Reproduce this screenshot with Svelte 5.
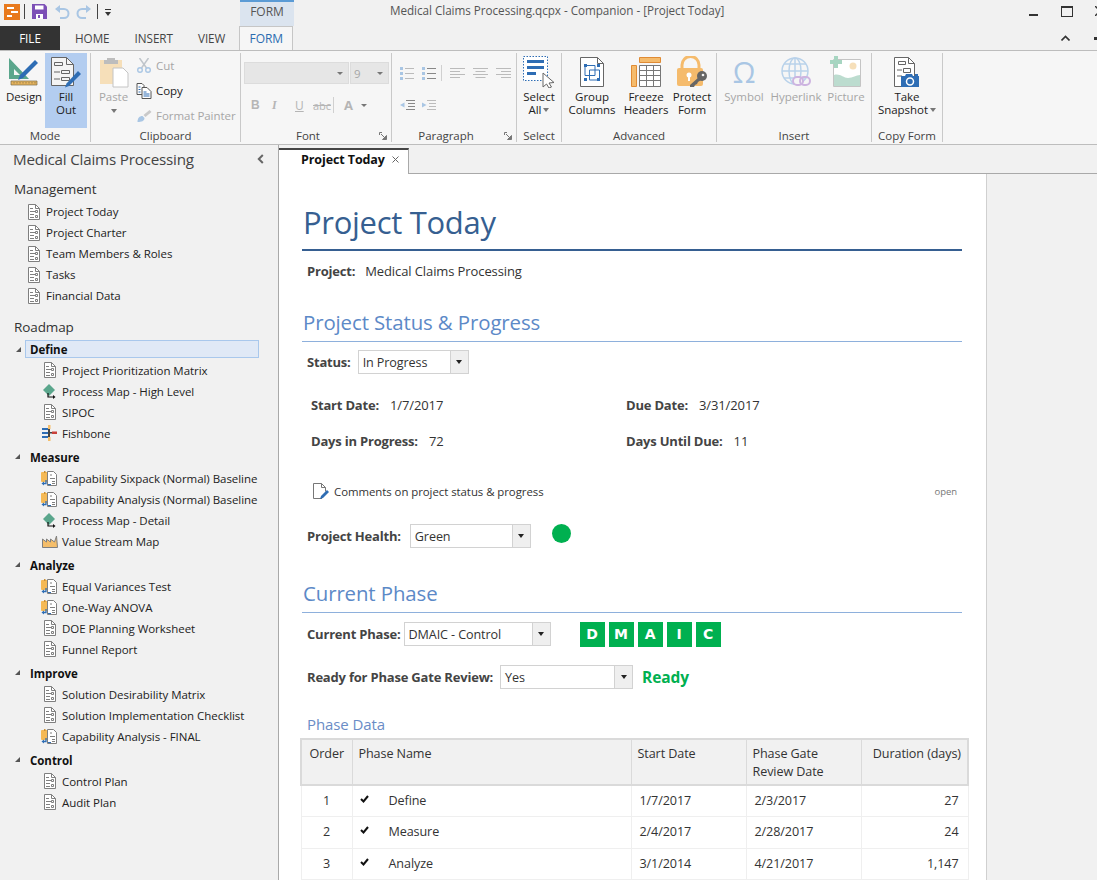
<script lang="ts">
  const management = ["Project Today", "Project Charter", "Team Members & Roles", "Tasks", "Financial Data"];

  const roadmap = [
    {
      name: "Define",
      items: [
        { label: "Project Prioritization Matrix", icon: "doc" },
        { label: "Process Map - High Level", icon: "flow" },
        { label: "SIPOC", icon: "doc" },
        { label: "Fishbone", icon: "fish" },
      ],
    },
    {
      name: "Measure",
      items: [
        { label: "\u00a0Capability Sixpack (Normal) Baseline", icon: "cap" },
        { label: "Capability Analysis (Normal) Baseline", icon: "cap" },
        { label: "Process Map - Detail", icon: "flow" },
        { label: "Value Stream Map", icon: "vsm" },
      ],
    },
    {
      name: "Analyze",
      items: [
        { label: "Equal Variances Test", icon: "cap" },
        { label: "One-Way ANOVA", icon: "cap" },
        { label: "DOE Planning Worksheet", icon: "doc" },
        { label: "Funnel Report", icon: "doc" },
      ],
    },
    {
      name: "Improve",
      items: [
        { label: "Solution Desirability Matrix", icon: "doc" },
        { label: "Solution Implementation Checklist", icon: "doc" },
        { label: "Capability Analysis - FINAL", icon: "cap" },
      ],
    },
    {
      name: "Control",
      items: [
        { label: "Control Plan", icon: "doc" },
        { label: "Audit Plan", icon: "doc" },
      ],
    },
  ];

  const phases = [
    { order: 1, name: "Define", start: "1/7/2017", gate: "2/3/2017", days: "27" },
    { order: 2, name: "Measure", start: "2/4/2017", gate: "2/28/2017", days: "24" },
    { order: 3, name: "Analyze", start: "3/1/2014", gate: "4/21/2017", days: "1,147" },
  ];
</script>

{#snippet navIcon(kind)}
  <svg class="nav-icon" viewBox="0 0 18 16" width="18" height="16">
    {#if kind === "doc"}
      <path d="M3.5.5h7l4 4v11h-11z" fill="#fff" stroke="#7f7f7f" />
      <path d="M10.5.5v4h4" fill="none" stroke="#7f7f7f" />
      <path d="M5 4.500h3M5 7.500h5M5 10.500h4M5 13.500h4" stroke="#7f7f7f" />
      <path d="M10.500 6.500h2v2h-2zM10.500 11.500h2v2h-2z" fill="none" stroke="#7f7f7f" />
    {:else if kind === "flow"}
      <path d="M8 1l6 6-6 6-6-6z" fill="#5aa68c" />
      <path d="M7 10v4h6" fill="none" stroke="#111" stroke-width="1.2" />
      <path d="M12 12l2.500 2-2.500 2z" fill="#111" />
    {:else if kind === "fish"}
      <path d="M1 3h6v2H1zM1 7h6v2H1zM1 11h6v2H1z" fill="#2e6db4" />
      <path d="M7 0h2.500v4H7zM7 12h2.500v4H7z" fill="#f5be6a" />
      <path d="M7 4h2v8H7z" fill="#444" />
      <path d="M9 7h2v1.500H9z" fill="#444" />
      <path d="M11 6.500h5v2.500h-5z" fill="#c9403a" />
    {:else if kind === "cap"}
      <path d="M0 3a1 1 0 0 1 1-1h8v10H1a1 1 0 0 1-1-1z" fill="#f5b955" />
      <path d="M3 1h1.500v2H3z" fill="#c98f35" />
      <path d="M6.500 1.500h6l3 3v11h-9z" fill="#fff" stroke="#7f7f7f" />
      <path d="M9 5h2M9 8.500h5M11 11.500h3M11 13.500h3" stroke="#7f7f7f" />
      <path d="M5 10v3.500H2" fill="none" stroke="#2e6db4" stroke-width="1.300" />
      <path d="M3 11.500L.5 13.500 3 15.500z" fill="#2e6db4" />
      <path d="M7 14.500h3" stroke="#2e6db4" />
    {:else}
      <path d="M1.500 14.500V6l4 3V6l4 3V6l4 3 2-6 1 11.500z" fill="#f5be6a" stroke="#7f7f7f" />
    {/if}
  </svg>
{/snippet}

{#snippet combo(text, kind)}
  <div class="combo {kind}">
    <span class="combo-text">{text}</span>
    <span class="combo-btn"><i class="arrow"></i></span>
  </div>
{/snippet}

{#snippet launcher()}
  <svg class="launcher" viewBox="0 0 8 8" width="8" height="8">
    <path d="M.5 3V.5H3" fill="none" stroke="#777" />
    <path d="M2 2l4.500 4.500M7.500 3.500v4h-4z" fill="#777" stroke="#777" />
  </svg>
{/snippet}

<div class="app">
  <!-- title bar -->
  <header class="titlebar">
    <div class="qat">
      <svg viewBox="0 0 16 16" width="16" height="16">
        <rect width="16" height="16" fill="#e8791c" />
        <path d="M3 4h7M7 8h7M3 12h5" stroke="#fff" stroke-width="2" />
      </svg>
      <i class="qat-sep"></i>
      <svg class="qat-save" viewBox="0 0 15 15" width="15" height="15">
        <path d="M0 0h12.500L15 2.500V15H0z" fill="#7c4fb6" />
        <path d="M3 1.500h8.500v4H3z" fill="#fff" />
        <path d="M4 10h7v5H4z" fill="#fff" />
        <path d="M6 11h2v3H6z" fill="#7c4fb6" />
      </svg>
      <svg class="qat-undo" viewBox="0 0 16 14" width="16" height="14">
        <path d="M2.500 4H10a4.500 4.500 0 0 1 0 9H6" fill="none" stroke="#a9c6e4" stroke-width="2" />
        <path d="M6 0L1 4l5 4z" fill="#a9c6e4" />
      </svg>
      <svg class="qat-redo" viewBox="0 0 16 14" width="16" height="14">
        <path d="M13.500 4H6a4.500 4.500 0 0 0 0 9h4" fill="none" stroke="#a9c6e4" stroke-width="2" />
        <path d="M10 0l5 4-5 4z" fill="#a9c6e4" />
      </svg>
      <i class="qat-sep second"></i>
      <svg class="qat-more" viewBox="0 0 6 7" width="6" height="7">
        <path d="M0 .5h6" stroke="#333" />
        <path d="M0 3h6L3 7z" fill="#333" />
      </svg>
    </div>
    <div class="context-tab">FORM</div>
    <div class="doc-title">Medical Claims Processing.qcpx - Companion - [Project Today]</div>
    <div class="win-controls">
      <i class="win-min"></i>
      <i class="win-max"></i>
      <svg class="win-close" viewBox="0 0 10 10" width="10" height="10">
        <path d="M0 0l10 10M10 0L0 10" stroke="#333" stroke-width="1.500" />
      </svg>
    </div>
  </header>

  <!-- ribbon tabs -->
  <nav class="tabs">
    <div class="tab-file">FILE</div>
    <div class="tab">HOME</div>
    <div class="tab">INSERT</div>
    <div class="tab">VIEW</div>
    <div class="tab-active">FORM</div>
    <div class="tabs-right">
      <svg viewBox="0 0 9 6" width="9" height="6">
        <path d="M.5 5.500L4.500 1.500l4 4" fill="none" stroke="#333" stroke-width="1.600" />
      </svg>
      <i class="pin"></i>
    </div>
  </nav>

  <!-- ribbon -->
  <section class="ribbon">
    <div class="group g-mode">
      <div class="tools">
        <div class="big b-design">
          <svg viewBox="0 0 32 30" width="32" height="30">
            <path d="M1 1l20 21H1zM6 12v6h6z" fill="#5aa68c" fill-rule="evenodd" />
            <path d="M3 24h26v4H3z" fill="#e7b45c" stroke="#7a6a48" stroke-width=".7" />
            <path d="M6 25v1.500M9 25v1.500M12 25v1.500M15 25v1.500M18 25v1.500M21 25v1.500M24 25v1.500M27 25v1.500" stroke="#7a6a48" stroke-width=".7" />
            <path d="M27 3l3 3-15 15-5 2 2-5z" fill="#2e6db4" />
          </svg>
          <span>Design</span>
        </div>
        <div class="big b-fill">
          <svg viewBox="0 0 32 32" width="32" height="32">
            <path d="M1.500 1.500h15l7 7v21h-22z" fill="#f4f4f4" stroke="#666" />
            <path d="M16.500 1.500v7h7" fill="none" stroke="#666" />
            <path d="M4.500 6.500h8v3h-8zM11.500 14.500h8v3h-8zM11.500 21.500h8v3h-8z" fill="none" stroke="#666" />
            <path d="M4 16h6M4 23h6" stroke="#666" />
            <path d="M28 15l3 3-12 12-4 1.500 1.500-4z" fill="#2e6db4" />
          </svg>
          <span>Fill<br />Out</span>
        </div>
      </div>
      <div class="group-label">Mode</div>
    </div>

    <div class="group g-clip">
      <div class="tools">
        <div class="big b-paste off">
          <svg viewBox="0 0 30 30" width="30" height="30">
            <path d="M1 3h22v24H1z" fill="#f6dfb9" />
            <path d="M8 1h8v2h3v4H5V3h3z" fill="#bdbdbd" />
            <path d="M14 11h10l5 5v14H14z" fill="#fff" stroke="#c4c4c4" />
          </svg>
          <span>Paste</span>
          <i class="caret"></i>
        </div>
        <div class="small-stack">
          <div class="small off">
            <svg viewBox="0 0 15 15" width="15" height="15">
              <path d="M3 0l7 10M12 0L5 10" stroke="#bfc5cb" stroke-width="1.500" />
              <circle cx="3.500" cy="12" r="2.300" fill="none" stroke="#a9c6e4" stroke-width="1.400" />
              <circle cx="11.500" cy="12" r="2.300" fill="none" stroke="#a9c6e4" stroke-width="1.400" />
            </svg>
            <span>Cut</span>
          </div>
          <div class="small">
            <svg viewBox="0 0 15 16" width="15" height="16">
              <path d="M.5.500h5l2 2v9h-7z" fill="#fff" stroke="#555" />
              <path d="M5.500 4.500h5l4 4v7h-9z" fill="#fff" stroke="#555" />
              <path d="M2 4h2M2 6.500h2M2 9h2M7 9h3M7 11h6M7 13h6" stroke="#2e6db4" />
            </svg>
            <span>Copy</span>
          </div>
          <div class="small off">
            <svg viewBox="0 0 15 14" width="15" height="14">
              <path d="M1 13c0-4 2-6 5-6l2 2c0 3-3 4-7 4z" fill="#a9c6e4" />
              <path d="M7 6l6-5 2 2-6 5z" fill="#c9c9c9" />
            </svg>
            <span>Format Painter</span>
          </div>
        </div>
      </div>
      <div class="group-label">Clipboard</div>
    </div>

    <div class="group g-font">
      <div class="tools column">
        <div class="font-row">
          <div class="font-box name"><i class="arrow soft"></i></div>
          <div class="font-box size"><span>9</span><i class="arrow soft"></i></div>
        </div>
        <div class="format-row">
          <b>B</b>
          <em>I</em>
          <u>U</u>
          <s>abc</s>
          <i class="fmt-sep"></i>
          <span class="color-a">A</span>
          <i class="arrow soft"></i>
        </div>
      </div>
      <div class="group-label has-launcher">Font{@render launcher()}</div>
    </div>

    <div class="group g-para">
      <div class="tools column">
        <div class="para-row">
          <svg viewBox="0 0 14 14" width="14" height="14">
            <path d="M0 1h3v3H0zM0 6h3v3H0zM0 11h3v3H0z" fill="#a9c6e4" />
            <path d="M5 2.500h9M5 7.500h9M5 12.500h9" stroke="#bbb" />
          </svg>
          <svg class="num" viewBox="0 0 14 14" width="14" height="14">
            <path d="M0 1h3v3H0zM0 6h3v3H0zM0 11h3v3H0z" fill="#a9c6e4" />
            <path d="M5 2.500h9M5 7.500h9M5 12.500h9" stroke="#888" />
          </svg>
          <i class="fmt-sep"></i>
          <svg viewBox="0 0 15 12" width="15" height="12">
            <path d="M0 1.500h15M0 4.500h10M0 7.500h15M0 10.500h10" stroke="#bbb" />
          </svg>
          <svg viewBox="0 0 15 12" width="15" height="12">
            <path d="M0 1.500h15M2.500 4.500h10M0 7.500h15M2.500 10.500h10" stroke="#bbb" />
          </svg>
          <svg viewBox="0 0 15 12" width="15" height="12">
            <path d="M0 1.500h15M5 4.500h10M0 7.500h15M5 10.500h10" stroke="#bbb" />
          </svg>
        </div>
        <div class="para-row second">
          <svg viewBox="0 0 16 12" width="16" height="12">
            <path d="M6 1.500h9M8 4.500h7M8 7.500h7M6 10.500h9" stroke="#888" />
            <path d="M4.500 3.500L0 6l4.500 2.500z" fill="#a9c6e4" />
          </svg>
          <svg viewBox="0 0 16 12" width="16" height="12">
            <path d="M6 1.500h9M8 4.500h7M8 7.500h7M6 10.500h9" stroke="#bbb" />
            <path d="M1 3.500L5.500 6 1 8.500z" fill="#a9c6e4" />
          </svg>
        </div>
      </div>
      <div class="group-label has-launcher">Paragraph{@render launcher()}</div>
    </div>

    <div class="group g-select">
      <div class="tools">
        <div class="big">
          <svg viewBox="0 0 32 32" width="32" height="32">
            <rect x=".5" y=".5" width="24" height="24" fill="#fff" stroke="#2e6db4" stroke-dasharray="1.500 1.500" />
            <path d="M4 4h17v3H4zM4 10h17v3H4zM4 16h9v3H4z" fill="#2e6db4" />
            <path d="M20 17l11 9.500-5 .5 2.500 4-2.500 1-2.500-4-3.500 3z" fill="#fff" stroke="#666" />
          </svg>
          <span>Select<br />All<i class="caret inline"></i></span>
        </div>
      </div>
      <div class="group-label">Select</div>
    </div>

    <div class="group g-adv">
      <div class="tools">
        <div class="big b-group">
          <svg viewBox="0 0 24 30" width="24" height="30">
            <path d="M.5.500h17l6 6v23H.5z" fill="#fff" stroke="#666" />
            <path d="M17.500.500v6h6" fill="none" stroke="#666" />
            <path d="M5 8.500h10v10H5zM9.500 13h10v10h-10z" fill="none" stroke="#2e6db4" />
            <path d="M4 7h3v3H4zM17 7h3v3h-3zM4 21h3v3H4zM17 21h3v3h-3z" fill="#2e6db4" />
          </svg>
          <span>Group<br />Columns</span>
        </div>
        <div class="big b-freeze">
          <svg viewBox="0 0 30 30" width="30" height="30">
            <path d="M8.500.5h21v5h-21zM.5 8.500h5v21h-5z" fill="#f5bb6c" stroke="#e08b34" />
            <path d="M8.500 8.500h21v21h-21z" fill="#fff" stroke="#777" />
            <path d="M8.500 13.500h21M8.500 18.500h21M8.500 23.500h21M15.500 8.500v21M22.500 8.500v21" stroke="#777" />
          </svg>
          <span>Freeze<br />Headers</span>
        </div>
        <div class="big b-protect">
          <svg viewBox="0 0 32 32" width="32" height="32">
            <path d="M6 13V9a8.500 8.500 0 0 1 17 0v4" fill="none" stroke="#f5bb6c" stroke-width="3" />
            <rect x="1" y="12" width="26" height="18" rx="2" fill="#f5bb6c" />
            <circle cx="13" cy="19" r="2.500" fill="#fff" />
            <path d="M12 20h2v5h-2z" fill="#fff" />
            <circle cx="26" cy="20" r="5" fill="#666" />
            <path d="M23 21l-9 8v2h4l1-2 2-1 1-2 3-2z" fill="#666" />
            <circle cx="27" cy="19" r="1.300" fill="#f5f5f5" />
          </svg>
          <span>Protect<br />Form</span>
        </div>
      </div>
      <div class="group-label">Advanced</div>
    </div>

    <div class="group g-insert">
      <div class="tools">
        <div class="big b-symbol off">
          <span class="omega">Ω</span>
          <span>Symbol</span>
        </div>
        <div class="big b-link off">
          <svg viewBox="0 0 30 30" width="30" height="30">
            <circle cx="14" cy="14" r="13" fill="none" stroke="#b9d2ea" stroke-width="1.500" />
            <ellipse cx="14" cy="14" rx="6" ry="13" fill="none" stroke="#b9d2ea" stroke-width="1.500" />
            <path d="M14 1v26M1 14h26M3 7h22M3 21h22" stroke="#b9d2ea" stroke-width="1.500" />
            <rect x="12" y="20" width="10" height="8" rx="4" fill="#f6f6f6" stroke="#cdb4e0" stroke-width="2" />
            <rect x="19" y="20" width="10" height="8" rx="4" fill="none" stroke="#cdb4e0" stroke-width="2" />
          </svg>
          <span>Hyperlink</span>
        </div>
        <div class="big b-pic off">
          <svg viewBox="0 0 32 32" width="32" height="32">
            <path d="M3.500 3.500h27v27h-27z" fill="#fff" stroke="#c4c4c4" />
            <circle cx="23" cy="10" r="3.500" fill="#f6dfb9" />
            <path d="M4 30V19c6-2 9 3 14 3 5 0 8-3 12-3v11z" fill="#bcdccf" />
            <path d="M4 0h4v4h4v4H8v4H4V8H0V4h4z" fill="#a7d5c1" />
          </svg>
          <span>Picture</span>
        </div>
      </div>
      <div class="group-label">Insert</div>
    </div>

    <div class="group g-copy">
      <div class="tools">
        <div class="big">
          <svg viewBox="0 0 26 30" width="26" height="30">
            <path d="M.5.500h14l6 6v23H.5z" fill="#fff" stroke="#666" />
            <path d="M14.500.500v6h6" fill="none" stroke="#666" />
            <path d="M4.500 4.500h7v3h-7zM9.500 11.500h7v4h-7z" fill="none" stroke="#666" />
            <path d="M3 13h5M3 19h5" stroke="#666" />
            <path d="M7 19h4l1-2h6l1 2h6v11H7z" fill="#2e6db4" />
            <path d="M21 17h3v2h-3z" fill="#2e6db4" />
            <circle cx="16" cy="24.500" r="3.500" fill="#2e6db4" stroke="#fff" stroke-width="1.500" />
          </svg>
          <span>Take<br />Snapshot<i class="caret inline"></i></span>
        </div>
      </div>
      <div class="group-label">Copy Form</div>
    </div>
  </section>

  <div class="body">
    <!-- navigator -->
    <aside class="sidebar">
      <div class="side-head">
        <span>Medical Claims Processing</span>
        <svg viewBox="0 0 7 10" width="7" height="10">
          <path d="M5.800 1L1.800 5l4 4" fill="none" stroke="#666" stroke-width="2" />
        </svg>
      </div>
      <h3 class="side-sec">Management</h3>
      <ul class="list top-list">
        {#each management as item}
          <li>{@render navIcon("doc")}<span>{item}</span></li>
        {/each}
      </ul>
      <h3 class="side-sec road">Roadmap</h3>
      {#each roadmap as phase, i}
        <div class="phase" class:current={i === 0}>
          <i class="twist"></i>
          <span>{phase.name}</span>
        </div>
        <ul class="list sub-list">
          {#each phase.items as item}
            <li>{@render navIcon(item.icon)}<span>{item.label}</span></li>
          {/each}
        </ul>
      {/each}
    </aside>

    <main class="workspace">
      <div class="doc-tabs">
        <div class="doc-tab">
          <span>Project Today</span>
          <svg viewBox="0 0 7 7" width="7" height="7">
            <path d="M.5.500l6 6M6.500.500l-6 6" stroke="#666" />
          </svg>
        </div>
      </div>

      <div class="page">
        <div class="form">
          <h1>Project Today</h1>
          <div class="field project"><b>Project:</b><span>Medical Claims Processing</span></div>

          <h2 class="status-head">Project Status &amp; Progress</h2>
          <div class="field status"><b>Status:</b>{@render combo("In Progress", "c-status")}</div>

          <div class="dates">
            <div class="field"><b>Start Date:</b><span>1/7/2017</span></div>
            <div class="field"><b>Due Date:</b><span>3/31/2017</span></div>
            <div class="field"><b>Days in Progress:</b><span>72</span></div>
            <div class="field"><b>Days Until Due:</b><span>11</span></div>
          </div>

          <div class="comments">
            <svg viewBox="0 0 16 16" width="16" height="16">
              <path d="M9 15.500H.5V.5h8l4 4v4" fill="none" stroke="#777" />
              <path d="M8.500.5v4h4" fill="none" stroke="#777" />
              <path d="M14 7l2 2-6 6-3 1 1-3z" fill="#2e6db4" />
            </svg>
            <span class="comments-text">Comments on project status &amp; progress</span>
            <span class="open">open</span>
          </div>

          <div class="field health">
            <b>Project Health:</b>{@render combo("Green", "c-health")}
            <i class="dot"></i>
          </div>

          <h2 class="phase-head">Current Phase</h2>
          <div class="field current-phase">
            <b>Current Phase:</b>{@render combo("DMAIC - Control", "c-phase")}
            <div class="dmaic">
              {#each ["D", "M", "A", "I", "C"] as letter}
                <span>{letter}</span>
              {/each}
            </div>
          </div>
          <div class="field gate">
            <b>Ready for Phase Gate Review:</b>{@render combo("Yes", "c-gate")}
            <strong class="ready">Ready</strong>
          </div>

          <h4>Phase Data</h4>
          <table>
            <colgroup>
              <col class="c1" /><col class="c2" /><col class="c3" /><col class="c4" /><col class="c5" />
            </colgroup>
            <thead>
              <tr>
                <th>Order</th>
                <th>Phase Name</th>
                <th>Start Date</th>
                <th>Phase Gate<br />Review Date</th>
                <th class="num">Duration (days)</th>
              </tr>
            </thead>
            <tbody>
              {#each phases as row}
                <tr>
                  <td class="center">{row.order}</td>
                  <td>
                    <svg class="tick" viewBox="0 0 9 8" width="9" height="8">
                      <path d="M1 4l2.500 2.500L8 1" fill="none" stroke="#111" stroke-width="2" />
                    </svg>{row.name}
                  </td>
                  <td class="date">{row.start}</td>
                  <td class="date">{row.gate}</td>
                  <td class="num">{row.days}</td>
                </tr>
              {/each}
            </tbody>
          </table>
        </div>
      </div>
    </main>
  </div>
</div>

<style>
  :global(body) {
    margin: 0;
    background: #f1f1f1;
  }

  .app {
    width: 1097px;
    height: 880px;
    overflow: hidden;
    display: flex;
    flex-direction: column;
    background: #f1f1f1;
    color: #222;
    font-family: "Open Sans", "Noto Sans", sans-serif;
    font-size: 11.5px;
    letter-spacing: -0.04px;
  }

  i {
    font-style: normal;
    display: block;
  }

  /* title bar */
  .titlebar {
    height: 26px;
    display: flex;
    flex: none;
  }

  .qat {
    width: 240px;
    display: flex;
    align-items: flex-start;
    padding: 4px 0 0 4px;
    box-sizing: border-box;
  }

  .qat-sep {
    width: 1px;
    height: 15px;
    background: #444;
    margin-left: 4px;
  }

  .qat-sep.second {
    margin-left: 5px;
  }

  .qat-save {
    margin-left: 7px;
  }

  .qat-undo {
    margin-left: 7px;
    margin-top: 1px;
  }

  .qat-redo {
    margin-left: 6px;
    margin-top: 1px;
  }

  .qat-more {
    margin: 5px 0 0 7px;
  }

  .context-tab {
    width: 54px;
    background: #dbe4ef;
    border-top: 2px solid #5b9bd5;
    box-sizing: border-box;
    text-align: center;
    color: #555;
    line-height: 19px;
    font-size: 12px;
  }

  .doc-title {
    margin-left: 96px;
    width: 400px;
    color: #555;
    line-height: 21px;
    white-space: nowrap;
    font-size: 11.7px;
  }

  .win-controls {
    margin-left: auto;
    display: flex;
    align-items: flex-start;
  }

  .win-min {
    width: 9px;
    height: 2px;
    background: #333;
    margin: 14px 23px 0 0;
  }

  .win-max {
    width: 10px;
    height: 8px;
    border: 1px solid #333;
    border-top-width: 2px;
    margin: 6px 22px 0 0;
  }

  .win-close {
    margin: 6px -8px 0 0;
  }

  /* ribbon tabs */
  .tabs {
    height: 24px;
    display: flex;
    flex: none;
    line-height: 24px;
    color: #444;
    font-size: 11.7px;
  }

  .tab-file {
    width: 60px;
    background: #333;
    color: #fff;
    text-align: center;
  }

  .tab {
    margin-left: 15px;
    margin-right: 10px;
  }

  .tab-active {
    flex: none;
    margin-left: 4px;
    width: 54px;
    box-sizing: border-box;
    height: 24px;
    text-align: center;
    color: #2b6cb0;
    background: #f6f6f6;
    border: 1px solid #c6c6c6;
    border-bottom: none;
    position: relative;
    z-index: 1;
    font-size: 12px;
  }

  .tabs-right {
    margin-left: auto;
    display: flex;
    align-items: center;
    padding-right: 0;
  }

  .pin {
    width: 3px;
    height: 3px;
    background: #333;
    margin-left: 24px;
  }

  /* ribbon */
  .ribbon {
    height: 95px;
    flex: none;
    box-sizing: border-box;
    display: flex;
    background: #f6f6f6;
    border-top: 1px solid #bdbdbd;
    border-bottom: 1px solid #bdbdbd;
    padding-top: 2px;
  }

  .group {
    box-sizing: border-box;
    height: 89px;
    border-right: 1px solid #c9c9c9;
    display: flex;
    flex-direction: column;
    flex: none;
  }

  .g-mode { width: 91px; }
  .g-clip { width: 150px; }
  .g-font { width: 151px; }
  .g-para { width: 125px; }
  .g-select { width: 45px; }
  .g-adv { width: 155px; }
  .g-insert { width: 155px; }
  .g-copy { width: 71px; }

  .tools {
    height: 75px;
    display: flex;
  }

  .tools.column {
    flex-direction: column;
  }

  .group-label {
    height: 14px;
    line-height: 16px;
    text-align: center;
    color: #444;
    position: relative;
  }

  .group-label.has-launcher {
    padding-right: 16px;
  }

  .launcher {
    position: absolute;
    right: 4px;
    top: 4px;
  }

  .big {
    flex: 1;
    min-width: 0;
    display: flex;
    flex-direction: column;
    align-items: center;
    padding-top: 3px;
    text-align: center;
    line-height: 13px;
    color: #222;
    white-space: nowrap;
  }

  .big svg {
    height: 32px;
    flex: none;
    margin-bottom: 2px;
  }

  .off {
    color: #a6a6a6;
  }

  .omega {
    font-size: 29px;
    line-height: 32px;
    height: 34px;
    color: #a9c6e4;
  }

  .caret {
    width: 0;
    height: 0;
    border: 3px solid transparent;
    border-top: 4px solid #777;
    border-bottom: none;
    margin-top: 6px;
  }

  .caret.inline {
    display: inline-block;
    margin: 0 0 2px 2px;
  }

  .b-design {
    flex: none;
    width: 45px;
    padding-left: 3px;
    box-sizing: border-box;
  }

  .b-fill {
    flex: none;
    width: 42px;
    background: #b3cdf0;
  }

  .b-paste {
    flex: none;
    width: 45px;
    padding-left: 0;
  }

  .b-group { flex: none; width: 60px; }
  .b-freeze { flex: none; width: 48px; }
  .b-protect { flex: none; width: 44px; }
  .b-symbol { flex: none; width: 54px; }
  .b-link { flex: none; width: 50px; }
  .b-pic { flex: none; width: 50px; }

  .small-stack {
    display: flex;
    flex-direction: column;
  }

  .small {
    display: flex;
    align-items: center;
    height: 25px;
    white-space: nowrap;
  }

  .small svg {
    width: 16px;
    margin-right: 4px;
    flex: none;
  }

  /* font group */
  .font-row {
    display: flex;
    gap: 1px;
    padding: 9px 0 0 3px;
  }

  .font-box {
    height: 22px;
    box-sizing: border-box;
    background: #e6e6e6;
    border: 1px solid #dcdcdc;
    display: flex;
    align-items: center;
    justify-content: flex-end;
    padding-right: 5px;
    color: #a6a6a6;
  }

  .font-box.name { width: 105px; }

  .font-box.size {
    width: 39px;
    justify-content: space-between;
    padding-left: 3px;
  }

  .arrow {
    width: 0;
    height: 0;
    border: 3.500px solid transparent;
    border-top: 4px solid #222;
    border-bottom: none;
  }

  .arrow.soft {
    border-width: 3px;
    border-top: 3px solid #777;
    border-bottom: none;
  }

  .format-row {
    display: flex;
    align-items: center;
    padding: 10px 0 0 10px;
    height: 22px;
    color: #b5b5b5;
    font-size: 12px;
  }

  .format-row b {
    font-family: "Liberation Sans", sans-serif;
    width: 21px;
  }

  .format-row em {
    font-family: "Liberation Serif", serif;
    font-weight: bold;
    width: 23px;
  }

  .format-row u {
    width: 18px;
  }

  .format-row s {
    width: 20px;
    font-size: 11px;
  }

  .fmt-sep {
    width: 1px;
    height: 16px;
    background: #d0d0d0;
  }

  .color-a {
    font-weight: bold;
    font-size: 13px;
    margin: 0 8px 0 10px;
  }

  /* paragraph group */
  .para-row {
    display: flex;
    align-items: center;
    gap: 8px;
    padding: 13px 0 0 8px;
    height: 14px;
  }

  .para-row .num {
    margin-right: -3px;
  }

  .para-row.second {
    padding-top: 18px;
    gap: 5px;
  }

  /* sidebar */
  .body {
    flex: 1;
    display: flex;
    min-height: 0;
  }

  .sidebar {
    width: 279px;
    box-sizing: border-box;
    flex: none;
    border-right: 1px solid #a9a9a9;
    padding-top: 3px;
  }

  .side-head {
    height: 22px;
    display: flex;
    align-items: center;
    padding: 0 14px 0 13px;
    justify-content: space-between;
    font-size: 15.200px;
    color: #444;
    letter-spacing: -0.2px;
  }

  h3.side-sec {
    margin: 9px 0 0 14px;
    font-weight: normal;
    font-size: 13.500px;
    line-height: 20px;
    color: #333;
    letter-spacing: -0.1px;
  }

  h3.road {
    margin: 11px 0 3px 14px;
  }

  .list {
    list-style: none;
    margin: 0;
    padding: 0;
  }

  .list li {
    height: 21px;
    display: flex;
    align-items: center;
    white-space: nowrap;
    color: #222;
  }

  .top-list {
    padding: 2px 0 0 25px;
  }

  .sub-list {
    padding: 0 0 3px 41px;
  }

  .nav-icon {
    flex: none;
    margin-right: 3px;
  }

  .phase {
    height: 18px;
    margin: 1.500px 19px 1.500px 25px;
    box-sizing: border-box;
    padding: 1px 0 0 5px;
    display: flex;
    align-items: center;
    font-weight: 700;
    color: #111;
    position: relative;
  }

  .phase.current {
    background: #e0e9f6;
    border: 1px solid #a9c8ec;
    padding-left: 4px;
  }

  .twist {
    position: absolute;
    left: -10px;
    top: 6px;
    width: 0;
    height: 0;
    border-left: 5px solid transparent;
    border-bottom: 5px solid #555;
  }

  /* document area */
  .workspace {
    flex: 1;
    display: flex;
    flex-direction: column;
    min-width: 0;
  }

  .doc-tabs {
    height: 29px;
    flex: none;
    box-sizing: border-box;
    border-bottom: 1px solid #a9a9a9;
    padding-top: 3px;
  }

  .doc-tab {
    width: 130px;
    height: 26px;
    box-sizing: border-box;
    background: #fff;
    border-top: 2px solid #444;
    border-right: 1px solid #a9a9a9;
    padding: 0 0 5px 22px;
    display: flex;
    align-items: center;
    gap: 7px;
    font-weight: 700;
    font-size: 12.500px;
    color: #111;
    white-space: nowrap;
    letter-spacing: -0.1px;
  }

  .page {
    width: 708px;
    flex: 1;
    box-sizing: border-box;
    background: #fff;
    border-right: 1px solid #d0d0d0;
    overflow: hidden;
  }

  .form {
    width: 660px;
    margin-left: 23px;
    padding-top: 28px;
  }

  h1 {
    margin: 0;
    height: 49px;
    box-sizing: border-box;
    border-bottom: 2px solid #365f91;
    font-weight: normal;
    font-size: 31px;
    line-height: 40px;
    color: #365f91;
    padding-left: 1px;
    letter-spacing: -0.3px;
  }

  h2 {
    margin: 0;
    font-weight: normal;
    font-size: 20.400px;
    line-height: 25px;
    height: 32px;
    box-sizing: border-box;
    color: #5c89c7;
    border-bottom: 1px solid #8eb0dc;
    padding-left: 1px;
    letter-spacing: -0.1px;
  }

  .field {
    display: flex;
    align-items: center;
    white-space: nowrap;
    padding-left: 5px;
    color: #333;
    font-size: 13px;
    letter-spacing: -0.1px;
  }

  .field b {
    font-weight: 700;
    color: #444;
    margin-right: 10px;
    letter-spacing: -0.2px;
  }

  .project {
    height: 20px;
    margin-top: 10px;
  }

  .status-head {
    margin-top: 29px;
  }

  .status {
    margin-top: 8px;
    height: 24px;
  }

  .status b {
    margin-right: 7px;
  }

  .combo {
    height: 24px;
    box-sizing: border-box;
    border: 1px solid #d2d2d2;
    display: flex;
    flex: none;
    background: #fff;
  }

  .combo-text {
    flex: 1;
    padding-left: 4px;
    line-height: 24px;
    color: #333;
    font-size: 12.600px;
  }

  .combo-btn {
    width: 17px;
    background: #efefef;
    border-left: 1px solid #d2d2d2;
    display: flex;
    align-items: center;
    justify-content: center;
  }

  .c-status { width: 111px; }
  .c-health { width: 121px; }
  .c-phase { width: 147px; }
  .c-gate { width: 133px; }

  .dates {
    display: grid;
    grid-template-columns: 315px 1fr;
    row-gap: 16px;
    margin-top: 21px;
    padding-left: 4px;
  }

  .dates .field {
    height: 20px;
  }

  .dates .field b {
    margin-right: 11px;
  }

  .comments {
    display: flex;
    align-items: center;
    height: 18px;
    margin: 31px 5px 0 11px;
  }

  .comments-text {
    margin-left: 5px;
    font-size: 11.400px;
    color: #333;
  }

  .open {
    margin-left: auto;
    font-size: 9.500px;
    color: #777;
  }

  .health {
    margin-top: 24px;
    height: 24px;
  }

  .health b {
    margin-right: 9px;
  }

  .dot {
    width: 19px;
    height: 19px;
    border-radius: 50%;
    background: #00b050;
    margin: -6px 0 0 21px;
  }

  .phase-head {
    margin-top: 33px;
  }

  .current-phase {
    margin-top: 9px;
    height: 24px;
  }

  .current-phase b {
    margin-right: 3px;
  }

  .dmaic {
    display: flex;
    gap: 4px;
    margin-left: 29px;
  }

  .dmaic span {
    width: 25px;
    height: 25px;
    background: #00b050;
    color: #fff;
    font-weight: 800;
    font-size: 14px;
    line-height: 25px;
    text-align: center;
    font-family: "DejaVu Sans", sans-serif;
  }

  .gate {
    margin-top: 19px;
    height: 24px;
  }

  .gate b {
    margin-right: 7px;
  }

  .ready {
    color: #00b050;
    font-size: 15.500px;
    font-weight: 700;
    margin-left: 9px;
  }

  h4 {
    margin: 25px 0 0 5px;
    font-weight: normal;
    font-size: 15px;
    line-height: 20px;
    height: 24px;
    color: #6a8cc6;
    letter-spacing: -0.1px;
  }

  table {
    width: 667px;
    margin-left: -2px;
    border-collapse: collapse;
    table-layout: fixed;
    color: #333;
    letter-spacing: -0.1px;
  }

  .c1 { width: 51px; }
  .c2 { width: 279px; }
  .c3 { width: 115px; }
  .c4 { width: 115px; }
  .c5 { width: 107px; }

  th {
    background: #f1f1f1;
    border: 1px solid #dadada;
    border-width: 2px 1px;
    font-weight: normal;
    text-align: left;
    vertical-align: top;
    height: 46px;
    box-sizing: border-box;
    padding: 5px 6px 0;
    line-height: 18px;
    white-space: nowrap;
    font-size: 12.600px;
  }

  th:first-child {
    border-left-width: 2px;
    text-align: center;
    padding: 5px 0 0;
  }

  th:last-child {
    border-right-width: 2px;
  }

  th.num {
    text-align: right;
  }

  td {
    border: 1px solid #efefef;
    height: 31.500px;
    box-sizing: border-box;
    padding: 0 6px 1px;
    font-size: 12.600px;
  }

  td.center {
    text-align: center;
  }

  td.date {
    padding-left: 8px;
  }

  td.num {
    text-align: right;
    padding-right: 9px;
  }

  .tick {
    margin: 0 20px 5px 1px;
    vertical-align: middle;
  }
</style>
